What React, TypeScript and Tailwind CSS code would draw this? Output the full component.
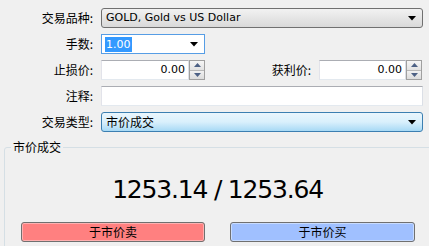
import React from 'react';

const ui = { fontFamily: '"DejaVu Sans", "Noto Sans CJK SC", sans-serif' };
const cjk = { fontFamily: '"Noto Sans CJK SC", "DejaVu Sans", sans-serif' };

const Caret = () => (
  <svg width="8" height="5" viewBox="0 0 8 5" className="shrink-0">
    <path d="M0 0 H8 L4 4.5 Z" fill="#000" />
  </svg>
);

const Label: React.FC<{ text: string; w?: string }> = ({ text, w = 'w-[93px]' }) => (
  <div className={`${w} shrink-0 text-right text-[12px] leading-[20px] text-black`} style={cjk}>
    {text}
  </div>
);

const Spinner = () => (
  <div className="w-[16px] h-[20px] shrink-0 flex flex-col border border-[#a0a0a0] bg-[#f0f0f0]">
    <div className="flex-1 flex items-center justify-center bg-gradient-to-b from-[#f6f6f6] to-[#e2e2e2] border-b border-[#b8b8b8]">
      <svg width="7" height="4" viewBox="0 0 7 4">
        <path d="M0 4 L3.5 0 L7 4 Z" fill="#4d6185" />
      </svg>
    </div>
    <div className="flex-1 flex items-center justify-center bg-gradient-to-b from-[#f1f1f1] to-[#dcdcdc]">
      <svg width="7" height="4" viewBox="0 0 7 4">
        <path d="M0 0 L7 0 L3.5 4 Z" fill="#4d6185" />
      </svg>
    </div>
  </div>
);

const NumBox: React.FC<{ w: string }> = ({ w }) => (
  <div className="flex items-center">
    <div
      className={`${w} h-[20px] bg-white border border-[#abadb3] border-b-[#e3e9ef] border-l-[#e2e3ea] border-r-[#dbdfe6] flex items-center justify-end pr-[3px] text-[11px]`}
      style={ui}
    >
      0.00
    </div>
    <Spinner />
  </div>
);

export default function App() {
  return (
    <div className="w-[429px] h-[246px] bg-[#f0f0f0] overflow-hidden select-none">
      <div className="flex flex-col gap-[6px] pt-[8px]">
        <div className="flex items-center gap-[8px]">
          <Label text="交易品种:" />
          <div
            className="w-[322px] h-[20px] rounded-[3px] border border-[#707070] bg-gradient-to-b from-[#f2f2f2] to-[#d9d9d9] flex items-center justify-between pl-[4px] pr-[6px] text-[11px] text-black"
            style={ui}
          >
            <span>GOLD, Gold vs US Dollar</span>
            <Caret />
          </div>
        </div>

        <div className="flex items-center gap-[8px]">
          <Label text="手数:" />
          <div
            className="w-[104px] h-[20px] bg-white border border-[#569de5] flex items-center justify-between pl-[3px] pr-[6px] text-[11px]"
            style={ui}
          >
            <span className="bg-[#3399ff] text-white px-[1px] leading-[15px]">1.00</span>
            <Caret />
          </div>
        </div>

        <div className="flex items-center">
          <Label text="止损价:" />
          <div className="ml-[8px]">
            <NumBox w="w-[88px]" />
          </div>
          <Label text="获利价:" w="w-[106px]" />
          <div className="ml-[8px]">
            <NumBox w="w-[87px]" />
          </div>
        </div>

        <div className="flex items-center gap-[8px]">
          <Label text="注释:" />
          <div className="w-[322px] h-[20px] bg-white border border-[#abadb3] border-b-[#e3e9ef] border-l-[#e2e3ea] border-r-[#dbdfe6]" />
        </div>

        <div className="flex items-center gap-[8px]">
          <Label text="交易类型:" />
          <div
            className="w-[322px] h-[20px] rounded-[3px] border border-[#3c7fb1] bg-gradient-to-b from-[#eaf6fd] via-[#d9f0fc] to-[#a7d9f5] flex items-center justify-between pl-[4px] pr-[6px] text-[12px] text-black"
            style={cjk}
          >
            <span>市价成交</span>
            <Caret />
          </div>
        </div>
      </div>

      <fieldset className="ml-[4px] mt-[7px] w-[440px] h-[120px] border border-[#d5dfe5] rounded-[3px]">
        <legend className="ml-[6px] px-[2px] text-[12px] leading-[16px] text-black" style={cjk}>
          市价成交
        </legend>
        <div
          className="mt-[20px] w-[425px] text-center text-[25px] leading-[30px] text-black tracking-[-1.2px]"
          style={ui}
        >
          1253.14 / 1253.64
        </div>
        <div className="mt-[17px] flex gap-[25px] pl-[16px]">
          <button
            className="w-[184px] h-[20px] rounded-[3px] border border-[#707070] bg-[#ff8080] shadow-[inset_0_0_0_1px_#ffb0b0] text-[12px] leading-[18px] text-black"
            style={cjk}
          >
            于市价卖
          </button>
          <button
            className="w-[185px] h-[20px] rounded-[3px] border border-[#707070] bg-[#a0c0ff] shadow-[inset_0_0_0_1px_#c8dcff] text-[12px] leading-[18px] text-black"
            style={cjk}
          >
            于市价买
          </button>
        </div>
      </fieldset>
    </div>
  );
}
